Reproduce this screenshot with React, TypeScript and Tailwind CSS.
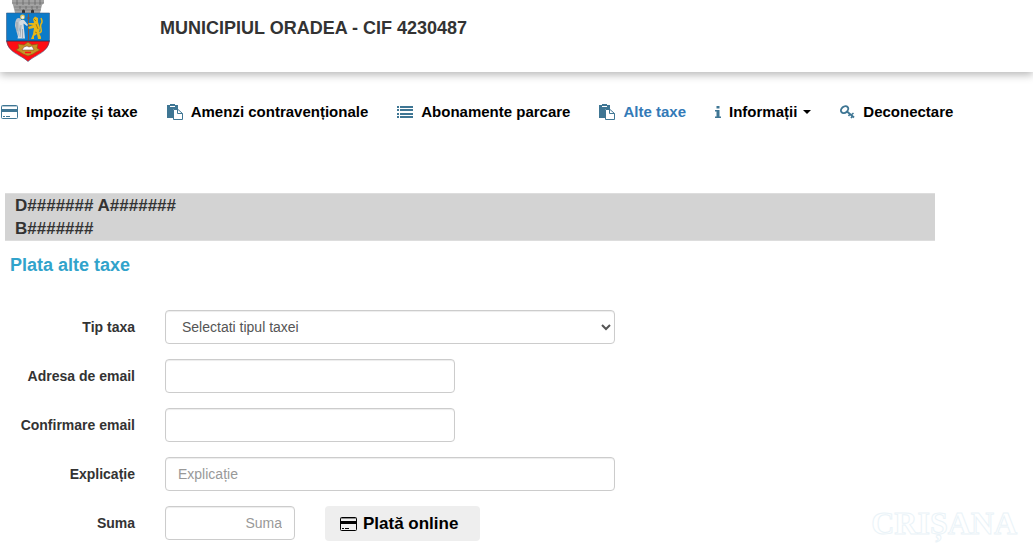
import { useState, type ReactNode } from 'react';

function Crest() {
  return (
    <svg viewBox="0 0 44 62" className="w-11 h-[62px] shrink-0" aria-label="Stema Oradea" role="img">
      {/* mural crown */}
      <path d="M6 -2H38V3L36 5L34 13H9L7 5L6 3Z" fill="#a3a3a3" />
      <path d="M6 3H38M8 7H35M9 10H35" stroke="#777" strokeWidth=".7" />
      <path d="M11 0V5M17 0V5M23 0V5M29 0V5M34 0V5M14 6V9M20 6V9M26 6V9M31 6V9" stroke="#666" strokeWidth=".8" />
      <path d="M16 13v-2a1.500 1.500 0 0 1 3 0v2M25 13v-2a1.500 1.500 0 0 1 3 0v2" fill="#333" />
      {/* shield */}
      <path d="M.5 13H43.500V41H.5Z" fill="#0c7bc9" />
      <path d="M.5 41H43.500C43 52 30 54 22 61.500C14 54 1 52 .5 41Z" fill="#ff0d14" />
      <path d="M.5 13H43.500V38C43.500 53 30 54 22 61.500C14 54 .5 53 .5 38Z" fill="none" stroke="#375b85" strokeWidth=".6" />
      <path d="M0 41H44" stroke="#1b3357" strokeWidth=".8" />
      <path d="M22.500 14V40M21 18H24" stroke="#7a5a4b" strokeWidth="1" />
      {/* angel */}
      <circle cx="16.500" cy="17" r="2.400" fill="#e5c85c" />
      <circle cx="16.700" cy="17.400" r="1.300" fill="#eee" />
      <path d="M15 19C11 16 9 20 9 26L12 37L14 28Z" fill="#b9c2cb" />
      <path d="M15 20L18 20L22 25L21 26L17.500 23.500L19 38.500H11.500L14 28L13 22Z" fill="#d6dce2" />
      <path d="M15 25L14 37M11 22V31M16.500 29V38" stroke="#7d8995" strokeWidth=".6" />
      {/* lion */}
      <path d="M27 19L29 16.500L32 18V22L34 28L33 33L35 37V39H32L31 34L28 36V39H25L27 34L28 28L23 29L22 27L27 25L22.500 24.500V23L28 23Z" fill="#e5b718" />
      <path d="M33 33C38 32 33 27 35 24C37 22 36 20 35 18" fill="none" stroke="#e5b718" strokeWidth="1.500" />
      <path d="M28 19L30 21M30 24L32 29M29 32L31 33" stroke="#8a6a0a" strokeWidth=".7" />
      {/* book */}
      <path d="M12 44L18 45L22 42L26 45L32 44L31 48L34 50L30 52L27 54L22 56L17 54L14 52L10 50L13 48Z" fill="#c69426" stroke="#8f5d14" strokeWidth=".7" />
      <path d="M18 47L21 46L23 47L26 46L28 50H16Z" fill="#fff" stroke="#733" strokeWidth=".5" />
      <path d="M19 52.500H25" stroke="#ff0d14" strokeWidth="1.500" />
    </svg>
  );
}

function CardIcon({ className = '' }: { className?: string }) {
  return (
    <svg viewBox="0 0 17 14" className={`w-[17px] h-[14px] shrink-0 ${className}`} fill="none">
      <rect x=".5" y=".5" width="16" height="13" rx="1" stroke="currentColor" />
      <path d="M1 4H16V7H1Z" fill="currentColor" />
      <path d="M2 11.500H4M5 11.500H9" stroke="currentColor" />
      <path d="M1 1.500H16" stroke="currentColor" opacity=".4" />
    </svg>
  );
}

function PasteIcon() {
  return (
    <svg viewBox="0 0 16 16" className="w-4 h-4 shrink-0" fill="none">
      <path d="M0 1H11V5H6V14H0Z" fill="#3f7694" />
      <path d="M3 2.500H8" stroke="#fff" />
      <path d="M3 .5H8" stroke="#3f7694" />
      <path d="M6.500 5.500H11L15.500 9.500V15.500H6.500Z" fill="#fff" stroke="#3f7694" />
      <path d="M10.500 5.500V9.500H15.500" stroke="#3f7694" />
    </svg>
  );
}

function ListIcon() {
  return (
    <svg viewBox="0 0 16 12" className="w-4 h-3 shrink-0" fill="#3f7694">
      <path d="M0 0H2V2H0ZM3 0H16V2H3ZM0 3H2V5H0ZM3 3H16V5H3ZM0 7H2V9H0ZM3 7H16V9H3ZM0 10H2V12H0ZM3 10H16V12H3Z" />
    </svg>
  );
}

function InfoIcon() {
  return (
    <svg viewBox="0 0 6 12" className="w-1.5 h-3 shrink-0" fill="#3f7694">
      <path d="M1.500 0H4.500V2.500H1.500ZM0 4H4.500V10.500H6V12H0V10.500H1.500V5.500H0Z" />
    </svg>
  );
}

function KeyIcon() {
  return (
    <svg viewBox="0 0 15 14" className="w-[15px] h-[14px] shrink-0" fill="none" stroke="#3f7694">
      <ellipse cx="4.600" cy="4.600" rx="4" ry="3" transform="rotate(-40 4.600 4.600)" strokeWidth="1.900" />
      <path d="M7 6.500L14 12.500" strokeWidth="1.900" />
      <path d="M10 9L8.500 11M12.500 11L11 13.200M11.500 9.800L13.500 8" strokeWidth="1.500" />
    </svg>
  );
}

const menu: { label: string; icon: ReactNode; active?: boolean; caret?: boolean }[] = [
  { label: 'Impozite și taxe', icon: <CardIcon className="text-[#3f7694]" /> },
  { label: 'Amenzi contravenționale', icon: <PasteIcon /> },
  { label: 'Abonamente parcare', icon: <ListIcon /> },
  { label: 'Alte taxe', icon: <PasteIcon />, active: true },
  { label: 'Informații', icon: <InfoIcon />, caret: true },
  { label: 'Deconectare', icon: <KeyIcon /> },
];

const control =
  'h-[34px] max-w-full rounded border border-[#ccc] bg-white px-3 text-sm text-[#555] placeholder:text-[#999] shadow-[inset_0_1px_1px_rgba(0,0,0,0.075)] focus:outline-none focus:border-[#66afe9]';

function Row({ id, label, children }: { id: string; label: string; children: ReactNode }) {
  return (
    <div className="flex items-start gap-[30px]">
      <label htmlFor={id} className="w-[135px] shrink-0 text-right text-sm leading-[34px] font-bold">{label}</label>
      {children}
    </div>
  );
}

export default function App() {
  const [tip, setTip] = useState('');
  const [email, setEmail] = useState('');
  const [confirmEmail, setConfirmEmail] = useState('');
  const [explicatie, setExplicatie] = useState('');
  const [suma, setSuma] = useState('');

  return (
    <div className="relative bg-white text-[#333] pb-3.5 font-['Liberation_Sans',Arial,sans-serif]">
      <header className="flex items-start h-[72px] px-1.5 gap-[110px] shadow-[0_3px_8px_rgba(0,0,0,0.28)]">
        <Crest />
        <h1 className="pt-3.5 text-lg font-bold">MUNICIPIUL ORADEA - CIF 4230487</h1>
      </header>

      <nav className="pt-[29px] pl-px">
        <ul className="flex flex-wrap gap-x-[29px] gap-y-3">
          {menu.map(item => (
            <li key={item.label}>
              <a
                href="#"
                className={`flex items-center text-[15px] leading-[22px] font-bold whitespace-nowrap hover:text-[#337ab7] ${item.active ? 'text-[#337ab7]' : 'text-black'}`}
              >
                {item.icon}
                <span className="pl-2">{item.label}</span>
                {item.caret && <span className="ml-1.5 border-x-4 border-t-4 border-x-transparent border-t-current" />}
              </a>
            </li>
          ))}
        </ul>
      </nav>

      <main className="pt-[70px]">
        <div className="mx-[5px] max-w-[930px] bg-[#d3d3d3] border-y border-[#ddd] px-2.5 text-[17px] leading-[23px] font-bold">
          <p>D####### A#######</p>
          <p>B#######</p>
        </div>
        <h2 className="mt-3 px-2.5 text-lg leading-6 font-bold text-[#31a3cb]">Plata alte taxe</h2>

        <form className="mt-[33px] flex flex-col gap-[15px] pr-4" onSubmit={e => e.preventDefault()}>
          <Row id="tip" label="Tip taxa">
            <select id="tip" value={tip} onChange={e => setTip(e.target.value)} className={`${control} w-[450px]`}>
              <option value="">Selectati tipul taxei</option>
            </select>
          </Row>
          <Row id="email" label="Adresa de email">
            <input id="email" type="email" value={email} onChange={e => setEmail(e.target.value)} className={`${control} w-[290px]`} />
          </Row>
          <Row id="confirm" label="Confirmare email">
            <input id="confirm" type="email" value={confirmEmail} onChange={e => setConfirmEmail(e.target.value)} className={`${control} w-[290px]`} />
          </Row>
          <Row id="explicatie" label="Explicație">
            <input id="explicatie" type="text" placeholder="Explicație" value={explicatie} onChange={e => setExplicatie(e.target.value)} className={`${control} w-[450px]`} />
          </Row>
          <Row id="suma" label="Suma">
            <input id="suma" type="text" placeholder="Suma" value={suma} onChange={e => setSuma(e.target.value)} className={`${control} w-[130px] text-right`} />
            <button type="submit" className="flex items-center gap-1.5 w-[155px] h-[35px] px-[15px] rounded bg-[#eee] text-[17px] font-bold text-black whitespace-nowrap hover:bg-[#e2e2e2]">
              <CardIcon />
              Plată online
            </button>
          </Row>
        </form>
      </main>

      {/* newspaper watermark over the page corner */}
      <div className="absolute right-4 bottom-3 font-['Liberation_Serif',serif] text-[32px] leading-10 font-bold text-white [-webkit-text-stroke:1px_#eaf3f8] pointer-events-none select-none">
        CRIȘANA
      </div>
    </div>
  );
}
